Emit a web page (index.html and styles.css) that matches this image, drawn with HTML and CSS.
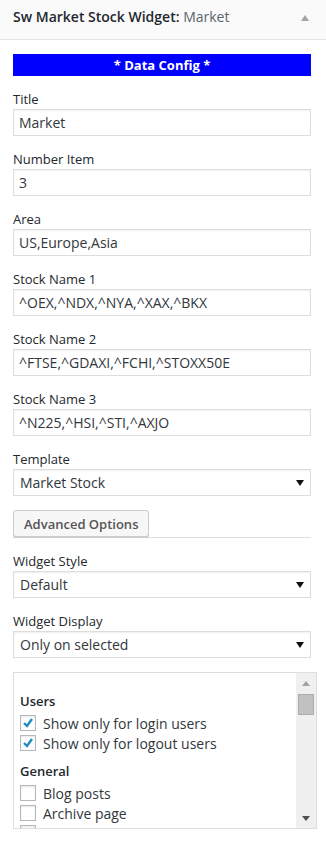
FILE: index.html
```html
<!DOCTYPE html>
<html lang="en">
	<head>
		<meta charset="utf-8" />
		<title>Sw Market Stock Widget</title>
		<link rel="stylesheet" href="styles.css">
	</head>
	<body>
		<div class="widget">
			<div class="widget-top">
				<h3 class="widget-title">Sw Market Stock Widget:<span class="in-title"> Market</span></h3>
				<svg class="toggle" width="8" height="6" viewBox="0 0 8 6"><path d="M4 0 L8 6 L0 6 Z" fill="#a0a5aa"/></svg>
			</div>
			<div class="widget-inside">
				<div class="config-bar">* Data Config *</div>

				<div class="field">
					<label>Title</label>
					<input class="widefat" type="text" value="Market">
				</div>
				<div class="field">
					<label>Number Item</label>
					<input class="widefat" type="text" value="3">
				</div>
				<div class="field">
					<label>Area</label>
					<input class="widefat" type="text" value="US,Europe,Asia">
				</div>
				<div class="field">
					<label>Stock Name 1</label>
					<input class="widefat" type="text" value="^OEX,^NDX,^NYA,^XAX,^BKX">
				</div>
				<div class="field">
					<label>Stock Name 2</label>
					<input class="widefat" type="text" value="^FTSE,^GDAXI,^FCHI,^STOXX50E">
				</div>
				<div class="field">
					<label>Stock Name 3</label>
					<input class="widefat" type="text" value="^N225,^HSI,^STI,^AXJO">
				</div>
				<div class="field">
					<label>Template</label>
					<div class="select"><span>Market Stock</span><svg width="8" height="6" viewBox="0 0 8 6"><path d="M0 0 L8 0 L4 6 Z" fill="#111"/></svg></div>
				</div>

				<div class="advanced">
					<button class="button">Advanced Options</button>
				</div>

				<div class="field">
					<label>Widget Style</label>
					<div class="select"><span>Default</span><svg width="8" height="6" viewBox="0 0 8 6"><path d="M0 0 L8 0 L4 6 Z" fill="#111"/></svg></div>
				</div>
				<div class="field">
					<label>Widget Display</label>
					<div class="select"><span>Only on selected</span><svg width="8" height="6" viewBox="0 0 8 6"><path d="M0 0 L8 0 L4 6 Z" fill="#111"/></svg></div>
				</div>

				<div class="display-box">
					<div class="display-list">
						<h4>Users</h4>
						<div class="check-row"><span class="cb"><svg width="14" height="14" viewBox="0 0 14 14"><path d="M3 7 L6 10 L11 3" fill="none" stroke="#1e8cbe" stroke-width="2.4"/></svg></span>Show only for login users</div>
						<div class="check-row"><span class="cb"><svg width="14" height="14" viewBox="0 0 14 14"><path d="M3 7 L6 10 L11 3" fill="none" stroke="#1e8cbe" stroke-width="2.4"/></svg></span>Show only for logout users</div>
						<h4>General</h4>
						<div class="check-row"><span class="cb"></span>Blog posts</div>
						<div class="check-row"><span class="cb"></span>Archive page</div>
						<div class="check-row"><span class="cb"></span>Single post page</div>
					</div>
					<div class="scrollbar">
						<div class="sb-btn"><svg width="8" height="5" viewBox="0 0 8 5"><path d="M4 0 L8 5 L0 5 Z" fill="#a3a3a3"/></svg></div>
						<div class="sb-thumb"></div>
						<div class="sb-track"></div>
						<div class="sb-btn"><svg width="8" height="5" viewBox="0 0 8 5"><path d="M0 0 L8 0 L4 5 Z" fill="#505050"/></svg></div>
					</div>
				</div>
			</div>
		</div>
	</body>
</html>
```

FILE: styles.css
```css
body {
	margin: 0;
	background: #fff;
	font-family: "Open Sans", "Liberation Sans", sans-serif;
	font-size: 13px;
	color: #444;
}
.widget {
	width: 326px;
}
.widget-top {
	height: 32px;
	background: #fafafa;
	border-bottom: 1px solid #e5e5e5;
	display: flex;
	justify-content: space-between;
	align-items: flex-start;
	padding: 7px 17px 0 13px;
}
.widget-title {
	margin: 0;
	font-size: 14px;
	line-height: 20px;
	font-weight: 600;
	color: #23282d;
}
.in-title {
	font-weight: 400;
	color: #5a636b;
}
.toggle {
	margin-top: 8px;
}
.widget-inside {
	padding: 14px 15px 13px 13px;
}
.config-bar {
	height: 22px;
	line-height: 22px;
	background: #0000ff;
	color: #fff;
	font-weight: 700;
	font-size: 13px;
	text-align: center;
	margin-bottom: 14px;
}
.field {
	margin-bottom: 14px;
}
.field label {
	display: block;
	line-height: 18px;
	margin-bottom: 1px;
	color: #23282d;
}
.widefat {
	display: block;
	width: 100%;
	height: 27px;
	box-sizing: border-box;
	margin: 0;
	border: 1px solid #ddd;
	box-shadow: inset 0 1px 2px rgba(0, 0, 0, 0.07);
	padding: 0 5px;
	font-family: "Open Sans", "Liberation Sans", sans-serif;
	font-size: 14px;
	color: #32373c;
	outline: none;
}
.select {
	height: 27px;
	box-sizing: border-box;
	border: 1px solid #ddd;
	box-shadow: inset 0 1px 2px rgba(0, 0, 0, 0.07);
	padding: 0 6px 0 6px;
	display: flex;
	align-items: center;
	justify-content: space-between;
	font-size: 14px;
	color: #32373c;
}
.field label + .select {
	margin-top: 1px;
}
.advanced {
	border-bottom: 1px solid #ddd;
	margin-bottom: 14px;
}
.button {
	display: block;
	height: 27px;
	padding: 0 10px;
	background: #f7f7f7;
	border: 1px solid #ccc;
	border-radius: 3px;
	box-shadow: 0 1px 0 #ccc;
	font-family: "Open Sans", "Liberation Sans", sans-serif;
	font-size: 13px;
	font-weight: 600;
	color: #555;
	cursor: pointer;
}
.display-box {
	display: flex;
	width: 304px;
	height: 157px;
	box-sizing: border-box;
	border: 1px solid #ddd;
	overflow: hidden;
}
.display-list {
	flex: 1;
	overflow: hidden;
	padding: 10px 0 0 6px;
}
.display-list h4 {
	margin: 8px 0 2px;
	font-size: 13px;
	line-height: 20px;
	font-weight: 600;
	color: #23282d;
}
.check-row {
	height: 20px;
	display: flex;
	align-items: center;
	font-size: 14px;
	color: #32373c;
	white-space: nowrap;
}
.cb {
	width: 16px;
	height: 16px;
	box-sizing: border-box;
	border: 1px solid #b4b9be;
	box-shadow: inset 0 1px 2px rgba(0, 0, 0, 0.1);
	margin-right: 7px;
	display: flex;
	align-items: center;
	justify-content: center;
}
.scrollbar {
	width: 20px;
	background: #f0f0f0;
	display: flex;
	flex-direction: column;
}
.sb-btn {
	height: 20px;
	display: flex;
	align-items: center;
	justify-content: center;
}
.sb-thumb {
	height: 21px;
	margin: 1px 2px 0;
	background: #c1c1c1;
	border: 1px solid #ababab;
	box-sizing: border-box;
}
.sb-track {
	flex: 1;
}
```
